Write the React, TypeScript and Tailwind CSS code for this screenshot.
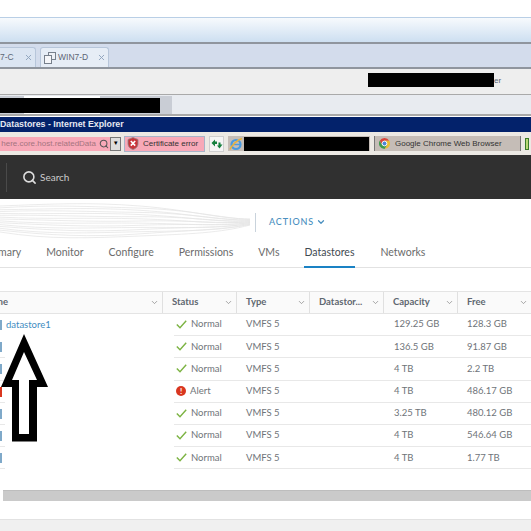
import { ChevronDown, Search, X } from "lucide-react";

const font = "font-['Lato','Liberation_Sans',sans-serif]";

const columns = [
  { label: "Name", width: "w-[162px]", pad: "pl-0" },
  { label: "Status", width: "w-[74px]", pad: "pl-[9px]" },
  { label: "Type", width: "w-[73px]", pad: "pl-[9px]" },
  { label: "Datastor...", width: "w-[74px]", pad: "pl-[9px]" },
  { label: "Capacity", width: "w-[74px]", pad: "pl-[9px]" },
  { label: "Free", width: "w-[74px]", pad: "pl-[9px]" },
];

const rows = [
  { name: "datastore1", status: "Normal", capacity: "129.25 GB", free: "128.3 GB" },
  { name: "", status: "Normal", capacity: "136.5 GB", free: "91.87 GB" },
  { name: "", status: "Normal", capacity: "4 TB", free: "2.2 TB" },
  { name: "", status: "Alert", capacity: "4 TB", free: "486.17 GB" },
  { name: "", status: "Normal", capacity: "3.25 TB", free: "480.12 GB" },
  { name: "", status: "Normal", capacity: "4 TB", free: "546.64 GB" },
  { name: "", status: "Normal", capacity: "4 TB", free: "1.77 TB" },
];

function TabIcon() {
  return (
    <svg width="12" height="12" viewBox="0 0 12 12" fill="none" stroke="#77808c">
      <rect x="4.5" y="0.5" width="7" height="7" fill="#eef1f6" />
      <rect x="0.5" y="3.5" width="7" height="8" fill="#f5f6f9" />
    </svg>
  );
}

function CertIcon() {
  return (
    <svg width="12" height="13" viewBox="0 0 12 13">
      <path d="M6 0.5 L11 2.5 V7 C11 10 8 12 6 12.5 C4 12 1 10 1 7 V2.5 Z" fill="#c9343a" stroke="#8d8d8d" strokeWidth="0.8" />
      <path d="M3.8 4 L8.2 8.6 M8.2 4 L3.8 8.6" stroke="#fff" strokeWidth="1.6" />
    </svg>
  );
}

function RefreshIcon() {
  return (
    <svg width="12" height="12" viewBox="0 0 12 12" fill="#15803d">
      <path d="M0.5 5 L4 1.5 V3.5 H6 V6 H4 V8.5 Z" />
      <path d="M11.5 6.5 L8.5 10.5 L6 7.5 H7.5 V4.5 H9.5 V6.5 Z" />
    </svg>
  );
}

function IeIcon() {
  return (
    <svg width="14" height="14" viewBox="0 0 14 14" fill="none">
      <circle cx="7" cy="7.5" r="4.5" stroke="#4a9be0" strokeWidth="2.2" />
      <path d="M3 7.5 H11" stroke="#4a9be0" strokeWidth="1.4" />
      <path d="M1 12.5 C3 8 8 3 13 1.5" stroke="#e8b23a" strokeWidth="1.4" />
    </svg>
  );
}

function ChromeIcon() {
  return (
    <svg width="11" height="11" viewBox="0 0 12 12">
      <path d="M6 0 A6 6 0 0 1 11.2 3 H6 Z M6 0 A6 6 0 0 0 0.8 3 L3 6.5 L6 3 Z" fill="#d9453a" />
      <path d="M11.2 3 A6 6 0 0 1 6 12 L8.6 7.5 L6 3 Z" fill="#e9bd33" />
      <path d="M0.8 3 A6 6 0 0 0 6 12 L8.6 7.5 H3.4 Z" fill="#3f9a4b" />
      <circle cx="6" cy="6" r="2.6" fill="#4a86d8" stroke="#fff" />
    </svg>
  );
}

// hand-drawn whiteout over the host name, lots of thin wavy lines
function Scribble() {
  const lines = Array.from({ length: 15 }, (_, i) => {
    const t = i / 14;
    const y0 = 4 + t * 26;
    const y1 = 1 + t * 36;
    const y2 = 4 + t * 30;
    const y3 = 16 + t * 14;
    const wobble = i % 2 === 0 ? 1 : -1;
    return `M0 ${y0} C50 ${y1 + wobble} 90 ${y1 - wobble} 140 ${y2} S220 ${y3 + wobble} 250 ${17 + t * 6}`;
  });
  return (
    <svg width="252" height="40" viewBox="0 0 252 40" fill="none" stroke="#e6e6e6" strokeWidth="0.8">
      {lines.map((d) => (
        <path key={d} d={d} />
      ))}
    </svg>
  );
}

function Arrow() {
  return (
    <svg className="absolute left-0 top-[330px]" width="50" height="112" viewBox="0 330 50 112">
      <path fill="#000" d="M24 334 L48 387 H37 V441.5 H12 V387 H1 Z" />
      <path fill="#fff" d="M24 352 L37 380 H29 V434 H19 V380 H12 Z" />
    </svg>
  );
}

export default function App() {
  return (
    <div className={`relative h-[531px] w-[531px] overflow-hidden bg-white ${font}`}>
      <div className="h-[17px] bg-white" />
      <div className="h-[25px] border-t border-[#b9cfe6] bg-gradient-to-b from-[#f7fafd] to-[#cddff1]" />

      {/* vm tabs */}
      <div className="flex h-[27px] items-end gap-[4px] border-y-2 border-[#8f959e] bg-[#d3dcec] font-['Liberation_Sans',sans-serif] text-[8.5px] text-[#5d6675]">
        <div className="flex h-[20px] w-[36px] items-center rounded-tr-[3px] border-r border-t border-[#b7c6da] bg-[#dbe5f2]">
          <span className="w-[24px]">7-C</span>
          <X size={9} strokeWidth={2.5} className="text-[#8fa3bd]" />
        </div>
        <div className="flex h-[20px] w-[69px] items-center gap-[2px] rounded-t-[3px] border-x border-t border-[#b7c6da] bg-[#e6edf6] pl-[3px]">
          <TabIcon />
          <span>WIN7-D</span>
          <X size={9} strokeWidth={2.5} className="ml-[7px] text-[#8fa3bd]" />
        </div>
      </div>

      {/* user row */}
      <div className="flex h-[26px] items-start border-b border-[#a9a9a9] bg-[#eeeeee] pt-[4px] pl-[366px] font-['Liberation_Sans',sans-serif] text-[8px] text-[#5d6675]">
        <div className="ml-[2px] h-[14px] w-[126px] bg-black" />
        <span className="mt-[4px] leading-[8px]">er</span>
      </div>

      {/* browser tab strip */}
      <div className="flex h-[21px] items-stretch border-b-2 border-[#a9a9a9] bg-[#e8ebf0] pt-[1px]">
        <div className="flex w-[24px] items-center bg-[#c9cdd5]">
          <div className="h-[15px] w-full bg-black" />
        </div>
        <div className="flex w-[76px] items-center bg-white">
          <div className="h-[15px] w-full bg-black" />
        </div>
        <div className="flex w-[72px] items-center bg-[#c9cdd5]">
          <div className="h-[15px] w-[60px] bg-black" />
        </div>
      </div>

      {/* ie title */}
      <div className="mt-[1px] flex h-[15px] items-center bg-[#03226b] font-['Liberation_Sans',sans-serif] text-[8.8px] font-bold text-[#e6e9f2]">
        Datastores - Internet Explorer
      </div>

      {/* ie toolbar */}
      <div className="flex h-[23px] items-center bg-[#ece9e4] font-['Liberation_Sans',sans-serif] text-[8px] text-[#333]">
        <div className="flex h-[14px] w-[110px] items-center justify-end gap-[3px] overflow-hidden bg-[#f8a9b8] pr-[1px] text-[#a5747f]">
          <span className="whitespace-nowrap">here.core.host.relatedData</span>
          <Search size={10} strokeWidth={2.5} className="shrink-0 text-[#555]" />
        </div>
        <div className="flex h-[14px] w-[11px] items-center justify-center border border-[#777] bg-[#ddd] text-[7px] text-black">▾</div>
        <div className="ml-[3px] flex h-[16px] w-[81px] items-center gap-[4px] border border-[#a8b4c8] bg-[#f8a9b8] pl-[2px]">
          <CertIcon />
          <span className="whitespace-nowrap">Certificate error</span>
        </div>
        <div className="ml-[4px] flex h-[16px] w-[15px] items-center justify-center border border-[#cfcfcf] bg-[#f5f5f5]">
          <RefreshIcon />
        </div>
        <div className="ml-[4px] flex h-[15px] w-[142px] items-center bg-[#c5bdb7] pl-[1px]">
          <IeIcon />
          <div className="ml-[1px] h-[14px] w-[125px] bg-black" />
        </div>
        <div className="ml-[4px] flex h-[15px] w-[147px] items-center gap-[5px] border-l border-r border-[#777] bg-[#c5bdb7] pl-[4px]">
          <ChromeIcon />
          <span className="whitespace-nowrap">Google Chrome Web Browser</span>
        </div>
        <div className="ml-[4px] h-[12px] w-[4px] border border-[#3c7d2b] bg-[#b9d977]" />
      </div>

      {/* vsphere header */}
      <div className="flex h-[44px] items-center bg-[#303030] pl-[6px]">
        <div className="h-[29px] w-px bg-[#4a4a4a]" />
        <Search size={15} strokeWidth={2.5} className="ml-[15px] text-[#dedede]" />
        <span className="ml-[3px] mt-[1px] text-[10px] text-[#cccccc]">Search</span>
      </div>

      {/* object title */}
      <div className="flex h-[46px] items-center bg-white">
        <Scribble />
        <div className="ml-[3px] h-[19px] w-px bg-[#c9d3dc]" />
        <span className="ml-[13px] text-[9px] font-medium tracking-[0.9px] text-[#4a90c0]">ACTIONS</span>
        <ChevronDown size={10} strokeWidth={3} className="ml-[2px] text-[#4a90c0]" />
      </div>

      {/* object tabs */}
      <div className="flex h-[23px] border-b border-[#e2e2e2] text-[10.5px] text-[#6b6b6b]">
        {["Summary", "Monitor", "Configure", "Permissions", "VMs", "Datastores", "Networks"].map((tab) => (
          <div
            key={tab}
            className={`flex items-start ${
              tab === "Datastores"
                ? "mb-[-1px] ml-[24px] h-[23px] border-b-2 border-[#1a82c4] px-px text-[#3f4a52]"
                : tab === "Summary"
                  ? "-ml-[22px]"
                  : "ml-[25px]"
            }`}
          >
            {tab}
          </div>
        ))}
      </div>

      {/* datastore table */}
      <div className="mt-[23px] text-[9.5px]">
        <div className="flex h-[23px] border-y border-[#e4e4e4] bg-[#fafafa] font-bold text-[#5f6770]">
          {columns.map((col, i) => (
            <div
              key={col.label}
              className={`flex items-center justify-between pr-[3px] ${col.width} ${col.pad} ${i > 0 ? "border-l border-[#e0e0e0]" : ""}`}
            >
              <span className={i === 0 ? "-ml-[17px]" : ""}>{col.label}</span>
              <ChevronDown size={9} className="text-[#8a8a8a]" />
            </div>
          ))}
        </div>
        {rows.map((row, i) => (
          <div key={i} className="flex h-[22.2px] items-center text-[#6f7479]">
            <div className="flex h-full w-[174px] items-center">
              <div className={`h-full w-[5px] ${i === 0 ? "" : "border-b border-[#e8e8e8]"}`}>
                <div className={`mt-[6px] h-[10px] w-[2px] ${row.status === "Alert" ? "bg-[#d9361f]" : "bg-[#7fa9c9]"}`} />
              </div>
              {row.name && <span className="ml-px text-[9.5px] text-[#3f8dbf]">{row.name}</span>}
            </div>
            <div className="flex h-full flex-1 items-center border-b border-[#e8e8e8]">
              <div className="flex w-[72px] items-center gap-[3px] pl-[2px]">
                {row.status === "Alert" ? (
                  <span className="flex h-[10px] w-[10px] items-center justify-center rounded-full bg-[#d9361f] text-[8px] font-bold leading-none text-white">!</span>
                ) : (
                  <svg width="11" height="9" viewBox="0 0 11 9" fill="none" stroke="#7cb342" strokeWidth="1.4">
                    <path d="M0.8 4.5 L4 7.8 L10.2 0.8" />
                  </svg>
                )}
                <span className="ml-[1px]">{row.status}</span>
              </div>
              <span className="w-[148px]">VMFS 5</span>
              <span className="w-[73px]">{row.capacity}</span>
              <span>{row.free}</span>
            </div>
          </div>
        ))}
      </div>

      {/* scrollbar */}
      <div className="mt-[21px] ml-[3px] h-[11px] border-t border-[#bdbdbd] bg-[#cacaca]" />
      <div className="mt-[18px] h-[12px] border-t border-[#e2e2e2] bg-[#f0f0f0]" />

      <Arrow />
    </div>
  );
}
